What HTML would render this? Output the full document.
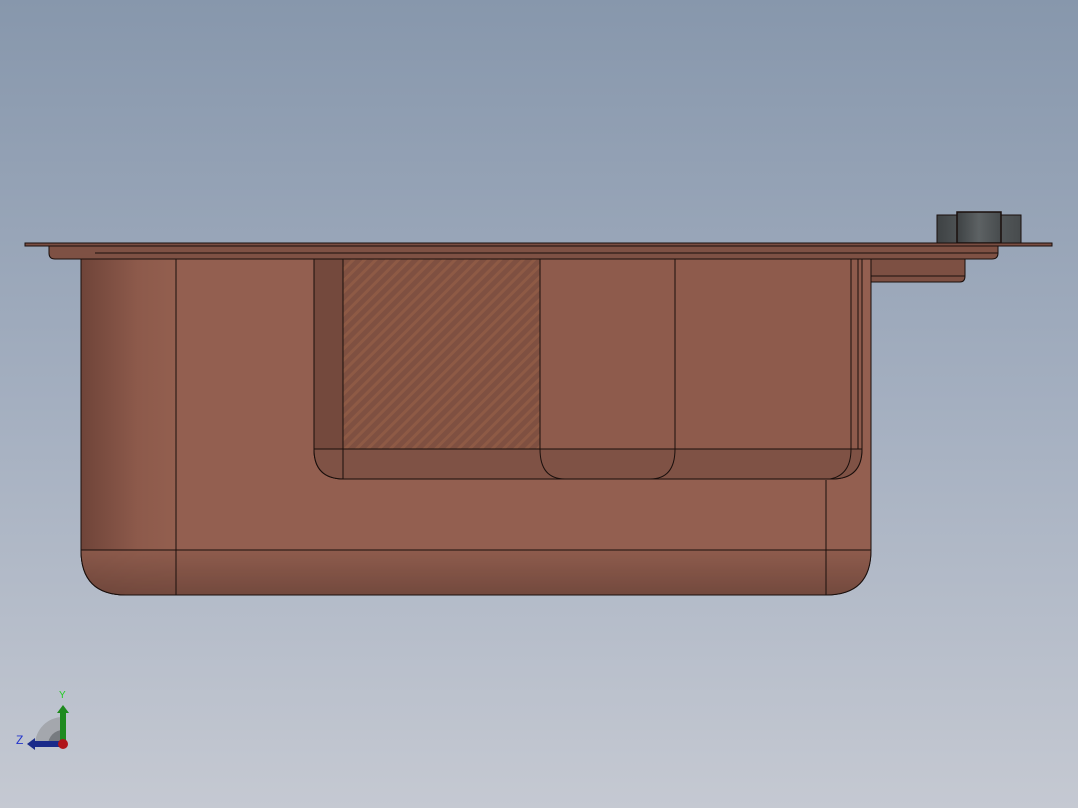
<!DOCTYPE html>
<html><head><style>
html,body{margin:0;padding:0;width:1078px;height:808px;overflow:hidden}
body{background:linear-gradient(#8797ac,#a4afc0 50%,#c5c9d2);font-family:"Liberation Sans",sans-serif}
svg{position:absolute;left:0;top:0}
</style></head><body>
<svg width="1078" height="808" viewBox="0 0 1078 808">
<defs>
<linearGradient id="side" x1="0" x2="1"><stop offset="0" stop-color="#6f4439"/><stop offset=".6" stop-color="#8d5a4b"/><stop offset="1" stop-color="#935f4f"/></linearGradient>
<linearGradient id="bot" x1="0" y1="0" x2="0" y2="1"><stop offset="0" stop-color="#8e5c4d"/><stop offset="1" stop-color="#6e463b"/></linearGradient>
<pattern id="hatch" width="8" height="8" patternUnits="userSpaceOnUse" patternTransform="rotate(45)"><rect width="8" height="8" fill="#7f5041"/><rect width="3" height="8" fill="#8e5a45"/></pattern>
<linearGradient id="cyl" x1="0" x2="1"><stop offset="0" stop-color="#3e4244"/><stop offset=".5" stop-color="#5d6264"/><stop offset="1" stop-color="#474b4d"/></linearGradient>
</defs>
<g stroke="#1a0f0c" stroke-width="1">
<!-- cylinder -->
<rect x="937" y="215" width="84" height="28" fill="url(#cyl)"/>
<rect x="957" y="212" width="44" height="31" fill="url(#cyl)" stroke-width="1.5"/>
<!-- right extension -->
<path d="M860 259 H965 V276 Q965 282 960 282 H860 Z" fill="#7d5043"/>
<line x1="871" y1="276" x2="965" y2="276"/>
<!-- main body -->
<path d="M81 259 H871 V550 Q871 595 826 595 H126 Q81 595 81 550 Z" fill="#935f50"/>
<path d="M81 259 H176 V595 H126 Q81 595 81 550 Z" fill="url(#side)"/>
<path d="M81 550 H871 Q871 595 826 595 H126 Q81 595 81 550 Z" fill="url(#bot)" opacity=".85"/>
<line x1="176" y1="259" x2="176" y2="595"/>
<line x1="826" y1="480" x2="826" y2="595"/>
<line x1="81" y1="550" x2="871" y2="550"/>
<!-- inner basin -->
<path d="M314 259 H862 V449 Q862 479 832 479 H344 Q314 479 314 449 Z" fill="#8e5b4c"/>
<path d="M314 259 H343 V479 H344 Q314 479 314 449 Z" fill="#74493d"/>
<rect x="343" y="259" width="197" height="190" fill="url(#hatch)"/>
<path d="M314 449 H862 Q862 479 832 479 H344 Q314 479 314 449 Z" fill="#7f5245"/>
<line x1="343" y1="259" x2="343" y2="479"/>
<line x1="540" y1="259" x2="540" y2="449"/>
<line x1="675" y1="259" x2="675" y2="449"/>
<line x1="851" y1="259" x2="851" y2="449"/>
<line x1="858" y1="259" x2="858" y2="449"/>
<path d="M540 449 Q540 479 565 479 M675 449 Q675 479 650 479 M851 449 Q851 475 830 479" fill="none"/>
<line x1="314" y1="449" x2="862" y2="449"/>
<!-- flange -->
<path d="M49 246 H998 V253 Q998 259 992 259 H55 Q49 259 49 253 Z" fill="#7e5144"/>
<line x1="95" y1="253" x2="998" y2="253"/>
<rect x="25" y="243" width="1027" height="3" fill="#7a4e42"/>
</g>
<!-- triad -->
<path d="M35 745 A28 28 0 0 1 63 717 V745 Z" fill="#a4a7ad"/>
<path d="M48 745 A15 15 0 0 1 63 730 V745 Z" fill="#777b80"/>
<rect x="60" y="712" width="6" height="32" fill="#1e8a1e"/>
<path d="M57 713 L63 705 L69 713 Z" fill="#1e8a1e"/>
<rect x="34" y="741" width="28" height="6" fill="#1a2a8a"/>
<path d="M35 738 L27 744 L35 750 Z" fill="#1a2a8a"/>
<circle cx="63" cy="744" r="5" fill="#b0141a"/>
<text x="59" y="698" font-size="10" fill="#22cc22">Y</text>
<text x="16" y="744" font-size="12" fill="#2233cc">Z</text>
</svg>
</body></html>
